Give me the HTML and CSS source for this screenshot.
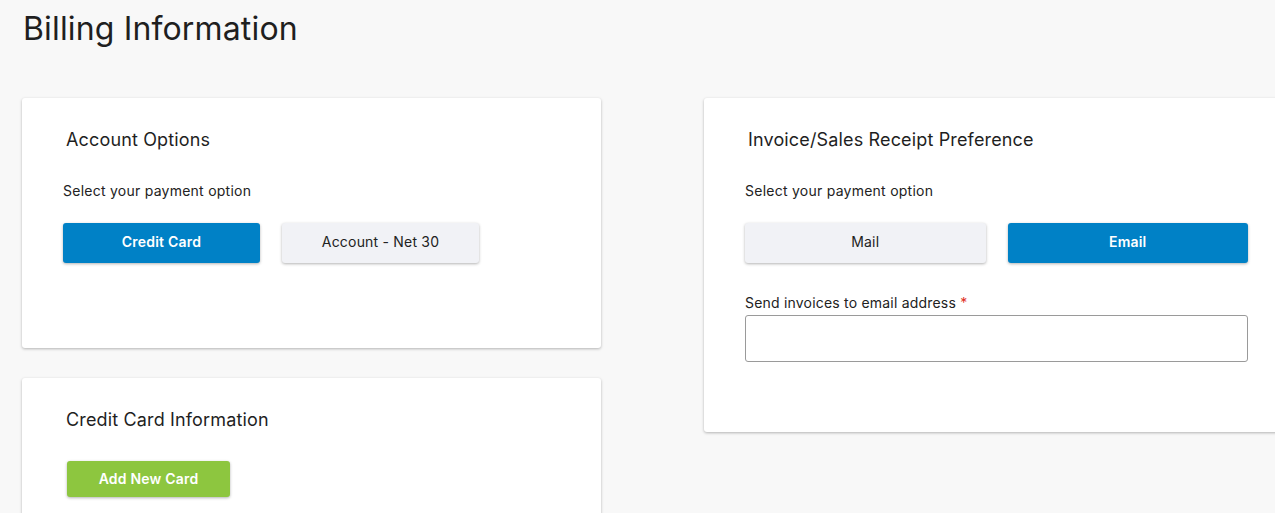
FILE: index.html
```html
<!DOCTYPE html>
<html lang="en">
<head>
<meta charset="utf-8">
<title>Billing Information</title>
<link rel="stylesheet" href="styles.css">
</head>
<body>
<main class="page">
  <h1 class="page-title">Billing Information</h1>
  <div class="columns">
    <div class="column">
      <section class="card card-account">
        <h2 class="card-title">Account Options</h2>
        <p class="hint">Select your payment option</p>
        <div class="btn-row btn-row-left">
          <button class="btn btn-primary">Credit Card</button>
          <button class="btn btn-secondary">Account - Net 30</button>
        </div>
      </section>
      <section class="card card-credit">
        <h2 class="card-title">Credit Card Information</h2>
        <button class="btn btn-success">Add New Card</button>
      </section>
    </div>
    <div class="column">
      <section class="card card-invoice">
        <h2 class="card-title">Invoice/Sales Receipt Preference</h2>
        <p class="hint">Select your payment option</p>
        <div class="btn-row btn-row-right">
          <button class="btn btn-secondary">Mail</button>
          <button class="btn btn-primary">Email</button>
        </div>
        <label class="field-label" for="email">Send invoices to email address <span class="req">*</span></label>
        <input class="field-input" id="email" type="text">
      </section>
    </div>
  </div>
</main>
</body>
</html>
```
FILE: styles.css
```css
* { box-sizing: border-box; }
html, body {
  margin: 0;
  padding: 0;
  background: #f8f8f8;
  overflow: hidden;
  font-family: Inter, "Noto Sans", "Liberation Sans", sans-serif;
  color: #222;
}
.page {
  padding: 9px 0 0 22px;
  width: 1400px;
}
.page-title {
  margin: 0 0 49px 1px;
  font-size: 32px;
  line-height: 40px;
  font-weight: 400;
  color: #1f1f1f;
  letter-spacing: 0.15px;
}
.columns {
  display: flex;
  gap: 103px;
  align-items: flex-start;
}
.column {
  display: flex;
  flex-direction: column;
  gap: 30px;
}
.card {
  background: #fff;
  border-radius: 3px;
  box-shadow: 0 1px 3px rgba(0,0,0,0.28);
  padding: 30px 41px 0 41px;
  display: flex;
  flex-direction: column;
  align-items: flex-start;
}
.card-account { width: 579px; height: 250px; }
.card-credit { width: 579px; height: 160px; }
.card-invoice { width: 585px; height: 334px; }
.card-title {
  margin: 0 0 0 3px;
  font-size: 18px;
  line-height: 24px;
  font-weight: 400;
  color: #1f1f1f;
  letter-spacing: 0.15px;
}
.hint {
  margin: 29px 0 0 0;
  font-size: 14px;
  line-height: 20px;
  color: #222;
  letter-spacing: 0.25px;
}
.btn-row {
  display: flex;
  gap: 22px;
  margin-top: 22px;
}
.btn-row-right { width: 503px; }
.btn-row-right .btn { flex: 1; }
.btn {
  height: 40px;
  width: 197px;
  border: none;
  border-radius: 3px;
  font-family: inherit;
  font-size: 14px;
  padding: 0 0 3px 0;
  box-shadow: 0 1px 3px rgba(0,0,0,0.3);
  cursor: pointer;
  letter-spacing: 0.2px;
}
.btn-primary {
  background: #0081c6;
  color: #fff;
  font-weight: 600;
}
.btn-secondary {
  background: #f1f2f6;
  color: #222;
  font-weight: 400;
}
.btn-success {
  margin: 29px 0 0 4px;
  width: 163px;
  height: 36px;
  background: #8dc63f;
  color: #fff;
  font-weight: 600;
  padding-bottom: 2px;
}
.field-label {
  margin-top: 30px;
  font-size: 14px;
  line-height: 20px;
  color: #222;
  letter-spacing: 0.2px;
}
.req { color: #e0301e; }
.field-input {
  margin-top: 2px;
  width: 503px;
  height: 47px;
  border: 1px solid #9a9a9a;
  border-radius: 3px;
  background: #fff;
}
```
